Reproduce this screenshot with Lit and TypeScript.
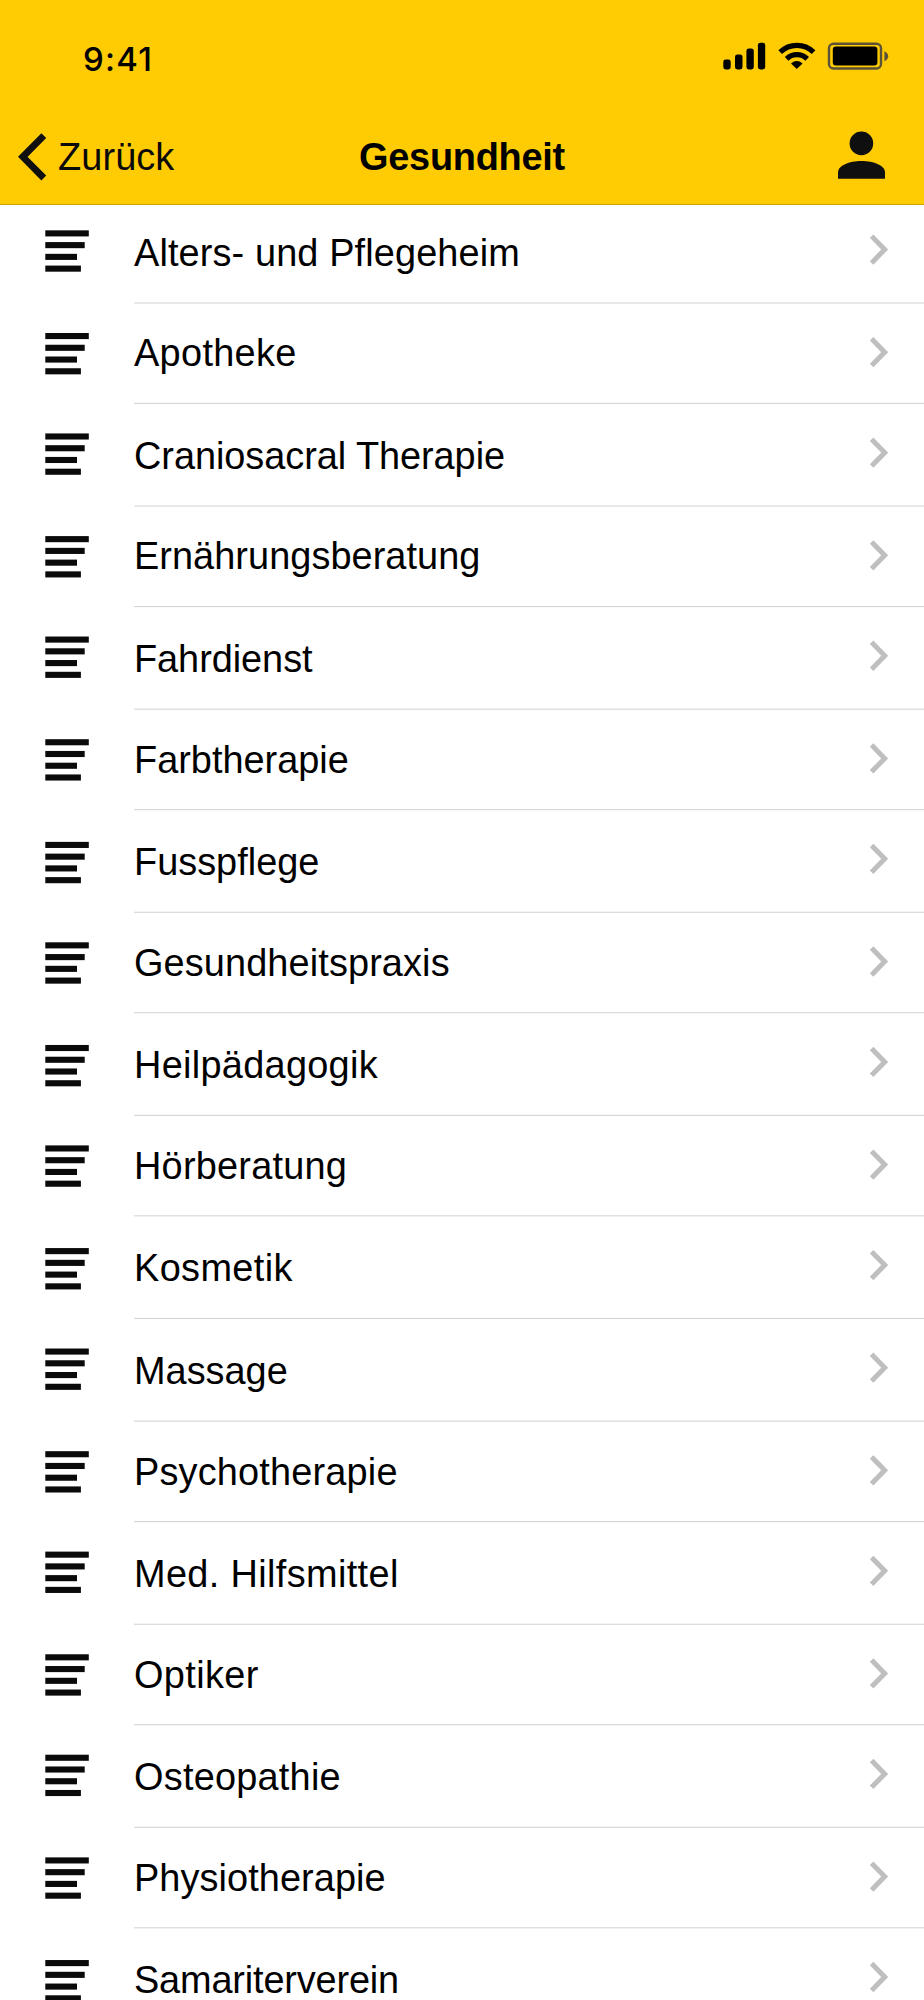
import { LitElement, html, svg, css } from "lit";
import { customElement, property } from "lit/decorators.js";

/** Rendered pixels per layout unit. */
const UNIT = 924 / 828;
const HEADER_BOTTOM = 205;

interface Entry {
  label: string;
  spacing: number;
}

const entries: Entry[] = [
  { label: "Alters- und Pflegeheim", spacing: 0.12 },
  { label: "Apotheke", spacing: 0.32 },
  { label: "Craniosacral Therapie", spacing: -0.05 },
  { label: "Ernährungsberatung", spacing: 0.05 },
  { label: "Fahrdienst", spacing: -0.05 },
  { label: "Farbtherapie", spacing: 0 },
  { label: "Fusspflege", spacing: 0 },
  { label: "Gesundheitspraxis", spacing: 0.11 },
  { label: "Heilpädagogik", spacing: 0.29 },
  { label: "Hörberatung", spacing: 0.23 },
  { label: "Kosmetik", spacing: 0.38 },
  { label: "Massage", spacing: 0 },
  { label: "Psychotherapie", spacing: 0.18 },
  { label: "Med. Hilfsmittel", spacing: 0.36 },
  { label: "Optiker", spacing: 0.36 },
  { label: "Osteopathie", spacing: 0.23 },
  { label: "Physiotherapie", spacing: 0.08 },
  { label: "Samariterverein", spacing: -0.16 },
];

/** Positions on the layout grid, stepping by a short (0) or long (1) row. */
const track = (start: number, steps: string): number[] => {
  const out = [start];
  for (const s of steps) out.push(out[out.length - 1] + (s === "1" ? 92 : 90));
  return out.map((n) => n * UNIT);
};

const lineY = track(271, "01010101011010101");
const iconY = track(206.4, "10101101010101011");
const chevronY = track(223.6, "10101010101101010");

const rows = entries.map((entry, i) => {
  const top = i === 0 ? HEADER_BOTTOM : Math.floor(lineY[i - 1]);
  const bottom = Math.floor(lineY[i]);
  return {
    ...entry,
    height: bottom - top,
    icon: iconY[i] - top,
    chevron: chevronY[i] - top,
    line: i === 0 ? null : lineY[i - 1] - top,
  };
});

@customElement("list-row")
class ListRow extends LitElement {
  @property({ type: Object }) row!: (typeof rows)[number];

  static styles = css`
    :host {
      display: block;
    }
    .row {
      display: grid;
      grid-template-columns: 134px minmax(0, 1fr);
      grid-template-rows: minmax(0, 1fr);
      height: 100%;
      background: #fff;
    }
    svg {
      display: block;
      width: 100%;
      height: 100%;
      min-height: 0;
      overflow: hidden;
    }
    .content {
      min-height: 0;
      display: grid;
      grid-template-columns: minmax(0, 1fr) 64px;
      grid-template-rows: 3px minmax(0, 1fr);
    }
    .rule {
      grid-area: 1 / 1 / 2 / 3;
    }
    .label {
      grid-area: 1 / 1 / 3 / 2;
      align-self: end;
      padding-bottom: 27px;
      font-size: 37.9px;
      line-height: 44px;
      color: #000;
      white-space: nowrap;
    }
    .chev {
      grid-area: 1 / 2 / 3 / 3;
    }
  `;

  render() {
    const r = this.row;
    return html`
      <div class="row">
        <svg>
          <g transform="translate(0 ${r.icon})" fill="#0a0a0a">
            <rect x="45.3" y="0" width="43.5" height="6.1" />
            <rect x="45.3" y="11.75" width="39.4" height="6.1" />
            <rect x="45.3" y="23.5" width="31.7" height="6.1" />
            <rect x="45.3" y="35.25" width="35.6" height="6.1" />
          </g>
        </svg>
        <div class="content">
          <svg class="rule">
            ${r.line === null
              ? null
              : svg`<rect x="0" y=${r.line} width="790" height=${UNIT} fill="#d6d6d6" />`}
          </svg>
          <span class="label" style="letter-spacing:${r.spacing}px">${r.label}</span>
          <svg class="chev">
            <path
              transform="translate(10 ${r.chevron})"
              d="M1.6 -13.4 L14.7 0 L1.6 13.4"
              fill="none"
              stroke="#bfbfbf"
              stroke-width="5"
            />
          </svg>
        </div>
      </div>
    `;
  }
}

@customElement("app-root")
class AppRoot extends LitElement {
  static styles = css`
    :host {
      display: block;
      width: 924px;
      height: 2000px;
      overflow: hidden;
      background: #fff;
      color: #0a0a0a;
      font-family: "Liberation Sans", Arial, sans-serif;
    }
    .header {
      box-sizing: border-box;
      height: 205px;
      background: #ffcc03;
      border-bottom: 1px solid #cca30b;
    }
    .status {
      display: flex;
      justify-content: space-between;
      height: 104px;
    }
    .time {
      padding: 39px 0 0 83px;
      font-family: Inter, sans-serif;
      font-size: 33px;
      font-weight: 500;
      line-height: 40px;
      letter-spacing: 1.2px;
      color: #000;
    }
    .nav {
      display: grid;
      grid-template-columns: 260px 1fr 260px;
      height: 100px;
    }
    .back {
      display: flex;
    }
    .back-label {
      padding: 31px 0 0 0;
      font-size: 37.9px;
      line-height: 44px;
      letter-spacing: 0.1px;
    }
    .title {
      padding-top: 31px;
      text-align: center;
      font-size: 37.9px;
      line-height: 44px;
      letter-spacing: -0.25px;
      font-weight: 700;
      color: #000;
    }
    .profile {
      justify-self: end;
    }
    svg {
      display: block;
    }
  `;

  render() {
    return html`
      <div class="header">
        <div class="status">
          <div class="time">9:41</div>
          <svg width="224" height="104" viewBox="700 0 224 104">
            <rect x="723.3" y="59.5" width="7.4" height="10" rx="2.4" />
            <rect x="735" y="54.4" width="7.5" height="15.1" rx="2.4" />
            <rect x="746.4" y="48.5" width="7.4" height="21" rx="2.4" />
            <rect x="757.9" y="42.8" width="7.3" height="26.7" rx="2.4" />
            <g fill="none" stroke="#000" stroke-width="5.2">
              <path d="M780.2 52.2 A24 24 0 0 1 813.6 52.2" />
              <path d="M786.6 58.8 A15 15 0 0 1 807.2 58.8" />
            </g>
            <path d="M791 63.4 Q796.8 58.6 802.6 63.4 L796.8 69 Z" />
            <rect x="829" y="43.8" width="52" height="24.7" rx="4.5" fill="none" stroke="#5c5238" stroke-width="2.4" />
            <rect x="832.8" y="46.6" width="44.6" height="19" rx="3" />
            <path d="M884.4 51.2 Q888.2 53 888.2 56.2 Q888.2 59.4 884.4 61.2 Z" fill="#5c5238" />
          </svg>
        </div>
        <div class="nav">
          <div class="back">
            <svg width="58" height="100" viewBox="0 104 58 100">
              <path d="M43.8 135.6 L22.8 156.8 L43.8 178" fill="none" stroke="#0f0f0f" stroke-width="6.8" />
            </svg>
            <span class="back-label">Zurück</span>
          </div>
          <div class="title">Gesundheit</div>
          <svg class="profile" width="124" height="100" viewBox="800 104 124 100" fill="#0f0f0f">
            <circle cx="861.4" cy="143.4" r="11.8" />
            <path d="M838 178.7 V172.5 C838 165.5 849 161 861.5 161 C874 161 885 165.5 885 172.5 V178.7 Z" />
          </svg>
        </div>
      </div>
      ${rows.map(
        (row) => html`<list-row .row=${row} style="height:${row.height}px"></list-row>`
      )}
    `;
  }
}
